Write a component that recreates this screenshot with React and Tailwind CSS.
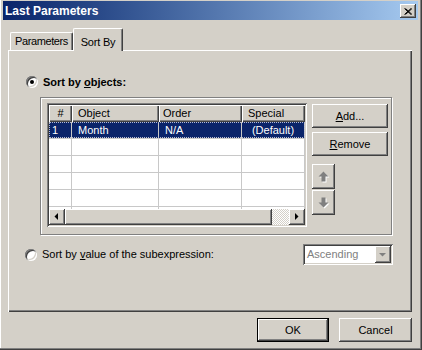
import React from 'react';

const raised = 'shadow-[inset_-1px_-1px_#404040,inset_1px_1px_#ffffff,inset_-2px_-2px_#808080,inset_2px_2px_#d4d0c8]';
const sunken = 'shadow-[inset_1px_1px_#808080,inset_-1px_-1px_#ffffff,inset_2px_2px_#404040,inset_-2px_-2px_#d4d0c8]';
const headCell = 'shadow-[inset_1px_1px_#ffffff,inset_-1px_-1px_#404040,inset_-2px_-2px_#808080]';

const cols = [
  { w: 'w-[23px]', title: '#', head: 'justify-center', cell: 'pl-[3px]' },
  { w: 'w-[87px]', title: 'Object', head: 'pl-[6px]', cell: 'pl-[6px]' },
  { w: 'w-[83px]', title: 'Order', head: 'pl-[4px]', cell: 'pl-[6px]' },
  { w: 'w-[63px]', title: 'Special', head: 'pl-[6px]', cell: 'justify-center' },
];

const rows = [['1', 'Month', 'N/A', '(Default)'], [], [], [], [], []];

const Radio = ({ checked }) => (
  <div className="w-[12px] h-[12px] rounded-full bg-white flex items-center justify-center shrink-0 shadow-[inset_1px_1px_#808080,inset_-1px_-1px_#ffffff,inset_2px_2px_#404040,inset_-2px_-2px_#d4d0c8]">
    {checked && <div className="w-[4px] h-[4px] rounded-full bg-black" />}
  </div>
);

const Triangle = ({ dir, color = '#000000' }) => (
  <svg width="8" height="8" viewBox="0 0 8 8">
    {dir === 'left' && <polygon points="5,0 5,7 1.5,3.5" fill={color} />}
    {dir === 'right' && <polygon points="2,0 2,7 5.5,3.5" fill={color} />}
    {dir === 'down' && <polygon points="0,2 7,2 3.5,5.5" fill={color} />}
  </svg>
);

const BlockArrow = ({ up }) => {
  const pts = up ? '5,0 10,5 7,5 7,10 3,10 3,5 0,5' : '5,10 10,5 7,5 7,0 3,0 3,5 0,5';
  return (
    <svg width="12" height="12" viewBox="0 0 12 12">
      <polygon points={pts} transform="translate(1.5 1.5)" fill="#ffffff" />
      <polygon points={pts} transform="translate(0.5 0.5)" fill="#808080" />
    </svg>
  );
};

const Button = ({ children, className = '' }) => (
  <div className={`flex items-center justify-center bg-[#d4d0c8] ${raised} ${className}`}>{children}</div>
);

export default function App() {
  return (
    <div className="w-[422px] h-[350px] bg-[#d4d0c8] flex flex-col pt-px pl-[3px] pr-[4px] text-[11px] text-black font-['Liberation_Sans',Arial,sans-serif] shadow-[inset_-1px_-1px_#404040,inset_-2px_-2px_#808080,inset_1px_0_#ffffff]">
      {/* title bar */}
      <div className="h-[19px] flex items-center justify-between bg-linear-to-r from-[#0a246a] to-[#a6caf0] pl-[2px] pr-[2px]">
        <span className="text-white font-bold text-[12px] leading-none">Last Parameters</span>
        <Button className="w-[16px] h-[14px] mt-px">
          <svg width="8" height="7" viewBox="0 0 8 7">
            <path d="M0.5 0.5 L7 6.5 M1.5 0.5 L8 6.5 M7 0.5 L0.5 6.5 M8 0.5 L1.5 6.5" stroke="#000" strokeWidth="1" />
          </svg>
        </Button>
      </div>

      {/* tabs */}
      <div className="mt-[8px] ml-[5px] mr-[6px] h-[22px] flex items-end pl-[2px]">
        <div className="w-[63px] h-[18px] border-l border-t border-white border-r border-r-[#404040] rounded-tl-[2px] rounded-tr-[2px] shadow-[inset_-1px_0_#808080] flex items-center justify-center pb-px tracking-[-0.4px]">
          Parameters
        </div>
        <div className="relative z-10 -mb-px w-[50px] h-[23px] bg-[#d4d0c8] border-l border-t border-white border-r border-r-[#404040] rounded-tl-[2px] rounded-tr-[2px] shadow-[inset_-1px_0_#808080] flex items-start justify-center pt-[5px] tracking-[-0.2px]">
          Sort By
        </div>
      </div>

      {/* panel */}
      <div className="ml-[5px] mr-[6px] h-[262px] flex flex-col shadow-[inset_1px_1px_#ffffff,inset_-1px_-1px_#404040,inset_-2px_-2px_#808080]">
        <div className="mt-[26px] ml-[18px] h-[12px] flex items-center gap-[5px]">
          <Radio checked />
          <span className="font-bold">Sort by <span className="underline">o</span>bjects:</span>
        </div>

        <div className="mt-[9px] ml-[32px] w-[352px] h-[138px] border border-[#808080] shadow-[inset_1px_1px_#ffffff,1px_1px_#ffffff] flex pt-[5px] pl-[6px] gap-[5px]">
          {/* table */}
          <div className={`w-[260px] h-[124px] bg-white p-[2px] ${sunken}`}>
            <div className="h-full flex flex-col overflow-hidden">
              <div className="flex h-[17px] shrink-0 bg-[#d4d0c8]">
                {cols.map((c) => (
                  <div key={c.title} className={`${c.w} shrink-0 flex items-center ${c.head} ${headCell}`}>{c.title}</div>
                ))}
              </div>
              <div className="flex-1 overflow-hidden">
                {rows.map((r, i) => (
                  <div key={i} className={`relative flex h-[17px] border-b border-[#c8c8c8] ${i === 0 ? 'bg-[#0a246a] text-white' : ''}`}>
                    {cols.map((c, j) => (
                      <div key={j} className={`${c.w} shrink-0 flex items-center border-r border-[#c8c8c8] ${c.cell}`}>{r[j] || ''}</div>
                    ))}
                    {i === 0 && <div className="absolute inset-0 border border-dotted border-[#b8bcd0] pointer-events-none" />}
                  </div>
                ))}
              </div>
              <div className="flex h-[16px] shrink-0">
                <Button className="w-[16px] h-[16px]"><Triangle dir="left" /></Button>
                <div className={`w-[207px] h-[16px] bg-[#d4d0c8] ${raised}`} />
                <div className="w-[17px] h-[16px] bg-[repeating-conic-gradient(#d4d0c8_0_25%,#ffffff_0_50%)] bg-[length:2px_2px]" />
                <Button className="w-[16px] h-[16px]"><Triangle dir="right" /></Button>
              </div>
            </div>
          </div>

          {/* side buttons */}
          <div className="flex flex-col">
            <Button className="w-[76px] h-[24px] mt-px"><span><span className="underline">A</span>dd...</span></Button>
            <Button className="w-[76px] h-[24px] mt-[4px]"><span><span className="underline">R</span>emove</span></Button>
            <Button className="w-[23px] h-[25px] mt-[8px]"><BlockArrow up /></Button>
            <Button className="w-[23px] h-[25px] mt-px"><BlockArrow /></Button>
          </div>
        </div>

        <div className="mt-[9px] ml-[17px] mr-[19px] h-[21px] flex items-center justify-between">
          <div className="flex items-center gap-[5px]">
            <Radio />
            <span>Sort by <span className="underline">v</span>alue of the subexpression:</span>
          </div>
          <div className={`w-[90px] h-[21px] bg-white p-[2px] flex items-center ${sunken}`}>
            <span className="flex-1 pl-[2px] text-[#808080] [text-shadow:1px_1px_#ffffff]">Ascending</span>
            <Button className="w-[16px] h-[17px]"><Triangle dir="down" color="#808080" /></Button>
          </div>
        </div>
      </div>

      {/* dialog buttons */}
      <div className="mt-[6px] mr-[6px] flex justify-end gap-[10px]">
        <div className="w-[72px] h-[24px] border border-black">
          <Button className="w-full h-full">OK</Button>
        </div>
        <Button className="w-[73px] h-[24px]">Cancel</Button>
      </div>
    </div>
  );
}
